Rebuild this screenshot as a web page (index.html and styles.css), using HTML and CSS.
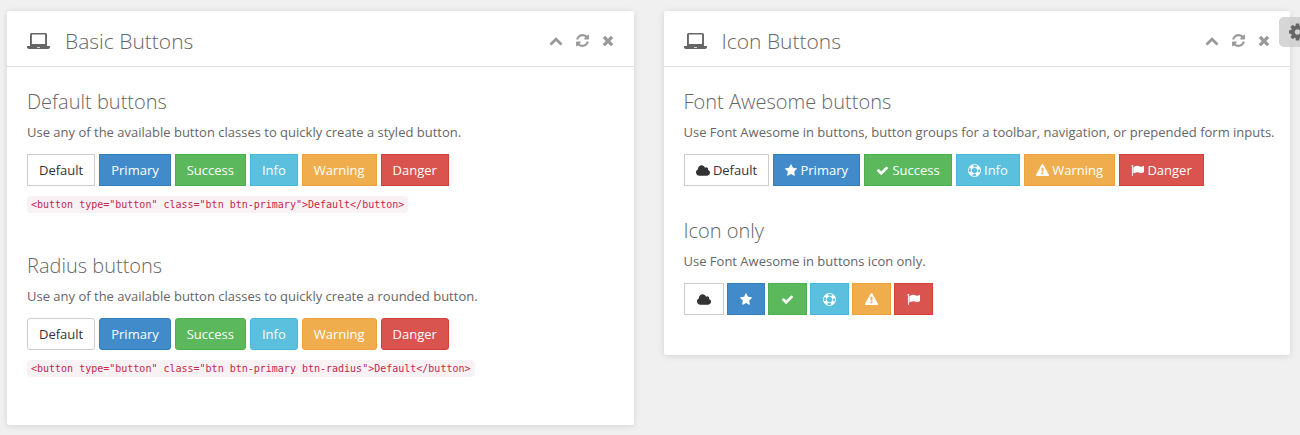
FILE: index.html
```html
<!DOCTYPE html>
<html lang="en">
<head>
<meta charset="utf-8">
<title>Buttons</title>
<link rel="stylesheet" href="styles.css">
</head>
<body>
<svg class="sprite" aria-hidden="true">
  <symbol id="laptop" viewBox="0 0 23 16"><path fill-rule="evenodd" d="M4.500 0h14A1.500 1.500 0 0 1 20 1.500V13h3v1.200Q23 16 21 16H2Q0 16 0 14.200V13h3V1.500A1.500 1.500 0 0 1 4.500 0zM4.900 1.600V11h13.200V1.600zM10 14v.8h3V14z"/></symbol>
  <symbol id="up" viewBox="0 0 1792 1792"><path d="M1683 1331l-166 165q-19 19-45 19t-45-19L896 965l-531 531q-19 19-45 19t-45-19l-166-165q-19-19-19-45.500t19-45.500l742-741q19-19 45-19t45 19l742 741q19 19 19 45.500t-19 45.500z"/></symbol>
  <symbol id="refresh" viewBox="128 0 1536 1792"><path d="M1639 1056q0 5-1 7-64 268-268 434.500t-478 166.500q-146 0-282.500-55t-243.500-157l-129 129q-19 19-45 19t-45-19-19-45v-448q0-26 19-45t45-19h448q26 0 45 19t19 45-19 45l-137 137q71 66 161 102t187 36q134 0 250-65t186-179q11-17 53-117 8-23 30-23h192q13 0 22.500 9.500t9.500 22.500zm25-800v448q0 26-19 45t-45 19h-448q-26 0-45-19t-19-45 19-45l138-138q-148-137-349-137-134 0-250 65t-186 179q-11 17-53 117-8 23-30 23h-199q-13 0-22.500-9.500t-9.500-22.500v-7q65-268 270-434.500t480-166.500q146 0 284 55.500t245 156.500l130-129q19-19 45-19t45 19 19 45z"/></symbol>
  <symbol id="times" viewBox="192 0 1408 1792"><path d="M1490 1322q0 40-28 68l-136 136q-28 28-68 28t-68-28l-294-294-294 294q-28 28-68 28t-68-28l-136-136q-28-28-28-68t28-68l294-294-294-294q-28-28-28-68t28-68l136-136q28-28 68-28t68 28l294 294 294-294q28-28 68-28t68 28l136 136q28 28 28 68t-28 68l-294 294 294 294q28 28 28 68z"/></symbol>
  <symbol id="cog" viewBox="128 0 1536 1792"><path d="M1152 896q0-106-75-181t-181-75-181 75-75 181 75 181 181 75 181-75 75-181zm512-109v222q0 12-8 23t-20 13l-185 28q-19 54-39 91 35 50 107 138 10 12 10 25t-9 23q-27 37-99 108t-94 71q-12 0-26-9l-138-108q-44 23-91 38-16 136-29 186-7 28-36 28h-222q-14 0-24.500-8.500t-11.500-21.500l-28-184q-49-16-90-37l-141 107q-10 9-25 9-14 0-25-11-126-114-165-168-7-10-7-23 0-12 8-23 15-21 51-66.500t54-70.500q-27-50-41-99l-183-27q-13-2-21-12.500t-8-23.500v-222q0-12 8-23t19-13l186-28q14-46 39-92-40-57-107-138-10-12-10-24 0-10 9-23 26-36 98.500-107.500t94.500-71.500q13 0 26 10l138 107q44-23 91-38 16-136 29-186 7-28 36-28h222q14 0 24.500 8.500t11.500 21.500l28 184q49 16 90 37l142-107q9-9 24-9 13 0 25 10 129 119 165 170 7 8 7 22 0 12-8 23-15 21-51 66.500t-54 70.500q26 50 41 98l183 28q13 2 21 12.500t8 23.500z"/></symbol>
  <symbol id="cloud" viewBox="64 0 1920 1664"><path d="M1984 1152q0 159-112.500 271.500T1600 1536H512q-185 0-316.500-131.500T64 1088q0-132 71-241.500T322 683q-2-28-2-43 0-212 150-362t362-150q158 0 286.500 88T1306 446q70-62 166-62 106 0 181 75t75 181q0 75-41 138 129 30 213 134.500t84 239.500z"/></symbol>
  <symbol id="star" viewBox="64 0 1664 1792"><path d="M1728 647q0 22-26 48l-363 354 86 500q1 7 1 20 0 21-10.500 35.500t-30.500 14.500q-19 0-40-12l-449-236-449 236q-22 12-40 12-21 0-31.500-14.500t-10.500-35.500q0-6 2-20l86-500-364-354q-25-27-25-48 0-37 56-46l502-73 225-455q19-41 49-41t49 41l225 455 502 73q56 9 56 46z"/></symbol>
  <symbol id="check" viewBox="0 0 1792 1792"><path d="M1671 566q0 40-28 68l-724 724-136 136q-28 28-68 28t-68-28l-136-136-362-362q-28-28-28-68t28-68l136-136q28-28 68-28t68 28l294 295 656-657q28-28 68-28t68 28l136 136q28 28 28 68z"/></symbol>
  <symbol id="ring" viewBox="0 0 28 28"><g fill="none" stroke="currentColor"><circle cx="14" cy="14" r="13" stroke-width="2"/><circle cx="14" cy="14" r="7" stroke-width="2"/><circle cx="14" cy="14" r="10" stroke-width="6" stroke-dasharray="7.854 7.854" stroke-dashoffset="-3.927"/></g></symbol>
  <symbol id="warning" viewBox="0 0 1792 1792"><path d="M1024 1375v-190q0-14-9.500-23.500t-22.500-9.500h-192q-13 0-22.500 9.500t-9.500 23.500v190q0 14 9.500 23.500t22.500 9.500h192q13 0 22.500-9.500t9.500-23.500zm-2-374l18-459q0-12-10-19-13-11-24-11h-220q-11 0-24 11-10 7-10 21l17 457q0 10 10 16.500t24 6.500h185q14 0 23.500-6.500t10.500-16.500zm-14-934l768 1408q35 63-2 126-17 29-46.500 46t-63.500 17h-1536q-34 0-63.500-17t-46.500-46q-37-63-2-126l768-1408q17-31 47-49t65-18 65 18 47 49z"/></symbol>
  <symbol id="flag" viewBox="0 0 1792 1792"><path d="M320 256q0 72-64 110v1266q0 13-9.500 22.500T224 1664h-64q-13 0-22.500-9.500T128 1632V366q-64-38-64-110 0-53 37.500-90.500T192 128t90.500 37.500T320 256zm1472 64v763q0 25-12.500 38.500T1740 1149q-215 116-369 116-61 0-123.500-22T1139 1195t-115.500-48-142.500-22q-192 0-464 146-17 9-33 9-26 0-45-19t-19-45V474q0-32 31-55 21-14 79-43 236-120 421-120 107 0 200 29t219 88q38 19 88 19 54 0 117.500-21t110-47 88-47T1728 256q26 0 45 19t19 45z"/></symbol>
</svg>

<main class="row">
  <section class="panel">
    <header class="panel-head">
      <svg class="laptop" aria-hidden="true"><use href="#laptop"/></svg>
      <h2 class="title">Basic Buttons</h2>
      <div class="tools">
        <button type="button" class="tool" aria-label="Collapse"><svg class="i14"><use href="#up"/></svg></button>
        <button type="button" class="tool" aria-label="Refresh"><svg class="i13"><use href="#refresh"/></svg></button>
        <button type="button" class="tool" aria-label="Close"><svg class="i12"><use href="#times"/></svg></button>
      </div>
    </header>
    <div class="panel-body">
      <section class="group">
        <h3 class="subtitle">Default buttons</h3>
        <p class="text">Use any of the available button classes to quickly create a styled button.</p>
        <div class="buttons">
          <button type="button" class="btn default">Default</button>
          <button type="button" class="btn primary">Primary</button>
          <button type="button" class="btn success">Success</button>
          <button type="button" class="btn info">Info</button>
          <button type="button" class="btn warning">Warning</button>
          <button type="button" class="btn danger">Danger</button>
        </div>
        <div class="sample"><code class="code">&lt;button type="button" class="btn btn-primary"&gt;Default&lt;/button&gt;</code></div>
      </section>
      <section class="group">
        <h3 class="subtitle">Radius buttons</h3>
        <p class="text">Use any of the available button classes to quickly create a rounded button.</p>
        <div class="buttons rounded">
          <button type="button" class="btn default">Default</button>
          <button type="button" class="btn primary">Primary</button>
          <button type="button" class="btn success">Success</button>
          <button type="button" class="btn info">Info</button>
          <button type="button" class="btn warning">Warning</button>
          <button type="button" class="btn danger">Danger</button>
        </div>
        <div class="sample"><code class="code">&lt;button type="button" class="btn btn-primary btn-radius"&gt;Default&lt;/button&gt;</code></div>
      </section>
    </div>
  </section>

  <section class="panel">
    <header class="panel-head">
      <svg class="laptop" aria-hidden="true"><use href="#laptop"/></svg>
      <h2 class="title">Icon Buttons</h2>
      <div class="tools">
        <button type="button" class="tool" aria-label="Collapse"><svg class="i14"><use href="#up"/></svg></button>
        <button type="button" class="tool" aria-label="Refresh"><svg class="i13"><use href="#refresh"/></svg></button>
        <button type="button" class="tool" aria-label="Close"><svg class="i12"><use href="#times"/></svg></button>
      </div>
    </header>
    <div class="panel-body">
      <section class="group">
        <h3 class="subtitle">Font Awesome buttons</h3>
        <p class="text">Use Font Awesome in buttons, button groups for a toolbar, navigation, or prepended form inputs.</p>
        <div class="buttons">
          <button type="button" class="btn default"><svg class="icon i14"><use href="#cloud"/></svg> Default</button>
          <button type="button" class="btn primary"><svg class="icon i12"><use href="#star"/></svg> Primary</button>
          <button type="button" class="btn success"><svg class="icon i13"><use href="#check"/></svg> Success</button>
          <button type="button" class="btn info"><svg class="icon i13"><use href="#ring"/></svg> Info</button>
          <button type="button" class="btn warning"><svg class="icon i13"><use href="#warning"/></svg> Warning</button>
          <button type="button" class="btn danger"><svg class="icon i13"><use href="#flag"/></svg> Danger</button>
        </div>
      </section>
      <section class="group">
        <h3 class="subtitle">Icon only</h3>
        <p class="text">Use Font Awesome in buttons icon only.</p>
        <div class="buttons icons-only">
          <button type="button" class="btn default" aria-label="Cloud"><svg class="icon i14"><use href="#cloud"/></svg></button>
          <button type="button" class="btn primary" aria-label="Star"><svg class="icon i12"><use href="#star"/></svg></button>
          <button type="button" class="btn success" aria-label="Check"><svg class="icon i13"><use href="#check"/></svg></button>
          <button type="button" class="btn info" aria-label="Help"><svg class="icon i13"><use href="#ring"/></svg></button>
          <button type="button" class="btn warning" aria-label="Warning"><svg class="icon i13"><use href="#warning"/></svg></button>
          <button type="button" class="btn danger" aria-label="Flag"><svg class="icon i13"><use href="#flag"/></svg></button>
        </div>
      </section>
    </div>
  </section>
</main>
<button type="button" class="settings" aria-label="Settings"><svg class="cog"><use href="#cog"/></svg></button>
</body>
</html>
```
FILE: styles.css
```css
* { box-sizing: border-box; }

body {
  margin: 0;
  background: #f0f0f0;
  color: #666;
  font: 13px/18px "Open Sans", sans-serif;
}

.sprite { position: absolute; width: 0; height: 0; }
svg { fill: currentColor; }

.row {
  display: grid;
  grid-template-columns: 1fr 1fr;
  align-items: start;
  gap: 30px;
  padding: 11px 10px 10px 7px;
}

.panel {
  min-width: 0;
  background: #fff;
  border-radius: 2px;
  box-shadow: 0 1px 6px rgba(0, 0, 0, 0.12);
}

.panel-head {
  display: flex;
  align-items: center;
  height: 56px;
  padding: 4px 20px 0;
  border-bottom: 1px solid #ddd;
}

.laptop { width: 23px; height: 16px; margin-right: 15px; }

.title {
  flex: 1;
  margin: 0;
  font-size: 21px;
  line-height: 28px;
  font-weight: 300;
}

.tools { display: flex; gap: 13px; }

.tool {
  display: flex;
  align-items: center;
  padding: 0;
  border: 0;
  background: none;
  color: #999;
}

.panel-body { padding: 24px 10px 6px 20px; }
.group { padding-bottom: 34px; }

.subtitle {
  margin: 0 0 10px;
  font-size: 20px;
  line-height: 22px;
  font-weight: 300;
}

.text { margin: 0 0 13px; }

.buttons { display: flex; flex-wrap: wrap; gap: 4px; }

.btn {
  height: 32px;
  padding: 0 11px;
  border: 1px solid;
  border-radius: 0;
  font: inherit;
  line-height: 30px;
  color: #fff;
}

.rounded .btn { border-radius: 3px; }
.icons-only { gap: 3px; }
.icons-only .btn { padding: 0 12px; }

.default { background: #fff; border-color: #ccc; color: #333; }
.primary { background: #428bca; border-color: #357ebd; }
.success { background: #5cb85c; border-color: #4cae4c; }
.info { background: #5bc0de; border-color: #46b8da; }
.warning { background: #f0ad4e; border-color: #eea236; }
.danger { background: #d9534f; border-color: #d43f3a; }

.icon { height: 13px; vertical-align: -2px; }
.i12 { width: 12px; }
.i13 { width: 13px; }
.i14 { width: 14px; }
.tool svg { height: 15px; }

.sample { display: flex; padding: 10px 0 8px; }

.code {
  padding: 2px 4px;
  border-radius: 4px;
  background: #f9f2f4;
  color: #c7254e;
  font: 10px/13px "DejaVu Sans Mono", monospace;
}

.settings {
  position: absolute;
  top: 17px;
  right: 0;
  display: flex;
  align-items: center;
  width: 21px;
  height: 30px;
  padding: 0 0 0 10px;
  overflow: hidden;
  border: 0;
  border-radius: 5px 0 0 5px;
  background: rgba(204, 204, 204, 0.8);
  color: #666;
}

.cog { flex: none; width: 17px; height: 20px; }
```
